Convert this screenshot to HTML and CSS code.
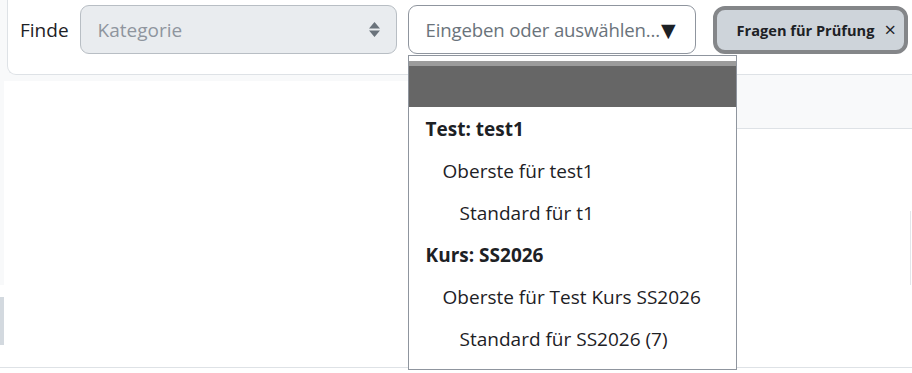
FILE: index.html
```html
<!DOCTYPE html>
<html lang="de">
<head>
<meta charset="utf-8">
<title>Fragen</title>
<link rel="stylesheet" href="styles.css">
</head>
<body>
<div class="top">
  <div class="card">
    <div class="toolbar">
      <span class="finde">Finde</span>
      <div class="select">
        <span>Kategorie</span>
        <svg class="arrows" width="11" height="15" viewBox="0 0 11 15"><path d="M5.5 0 L11 6.5 H0 Z M0 8.5 H11 L5.5 15 Z" fill="#6a737b"/></svg>
      </div>
      <div class="combo">
        <div class="input"><span class="ph">Eingeben oder auswählen...</span><span class="caret">▼</span></div>
        <div class="dropdown">
          <div class="dd-head"></div>
          <div class="item group">Test: test1</div>
          <div class="item lv1">Oberste für test1</div>
          <div class="item lv2">Standard für t1</div>
          <div class="item group">Kurs: SS2026</div>
          <div class="item lv1">Oberste für Test Kurs SS2026</div>
          <div class="item lv2">Standard für SS2026 (7)</div>
        </div>
      </div>
      <div class="chip"><span class="chip-text">Fragen für Prüfung</span><span class="chip-x">×</span></div>
    </div>
  </div>
</div>
<div class="content">
  <div class="lstrip">
    <div class="ls-a"></div>
    <div class="ls-b"></div>
    <div class="ls-c"></div>
  </div>
  <div class="lmain"></div>
  <div class="rmain">
    <div class="band"></div>
    <div class="vline"></div>
  </div>
</div>
</body>
</html>
```

FILE: styles.css
```css
html, body {
  margin: 0;
  padding: 0;
  background: #ffffff;
  overflow: hidden;
}
body {
  width: 912px;
  height: 373px;
  font-family: "Open Sans", "Noto Sans", sans-serif;
  color: #1d2125;
}
.top {
  background: #f8f9fa;
  padding-left: 7px;
  height: 75px;
}
.card {
  background: #ffffff;
  border: 1px solid #dee2e6;
  border-top: none;
  border-right: none;
  border-bottom-left-radius: 9px;
  box-sizing: border-box;
  height: 75px;
}
.toolbar {
  display: flex;
  align-items: center;
  padding: 5px 0 0 12px;
  height: 49px;
}
.finde {
  font-size: 19px;
  margin-right: 11px;
}
.select {
  width: 317px;
  height: 49px;
  box-sizing: border-box;
  background: #e9ecef;
  border: 1px solid #b8bec4;
  border-radius: 9px;
  display: flex;
  align-items: center;
  justify-content: space-between;
  padding: 0 16px 0 17px;
  font-size: 19px;
  color: #8f959e;
}
.arrows { display: block; }
.combo {
  position: relative;
  margin-left: 11px;
}
.input {
  width: 288px;
  height: 49px;
  box-sizing: border-box;
  background: #fff;
  border: 1px solid #8f959e;
  border-radius: 9px;
  display: flex;
  align-items: center;
  padding-left: 17px;
  font-size: 18.6px;
  letter-spacing: -0.15px;
  color: #6a737b;
  white-space: nowrap;
  overflow: hidden;
}
.caret {
  margin-left: 1px;
  font-size: 19px;
  line-height: 22px;
  color: #1d2125;
  font-family: "DejaVu Sans", sans-serif;
  letter-spacing: 0;
}
.dropdown {
  position: absolute;
  left: 0;
  top: 50px;
  width: 329px;
  height: 315px;
  box-sizing: border-box;
  background: #fff;
  border: 1px solid #8f959e;
  padding-top: 5px;
  z-index: 5;
}
.dd-head {
  height: 41px;
  background: #666666;
  border-top: 5px solid #9b9b9b;
}
.item {
  height: 42px;
  line-height: 44px;
  font-size: 19px;
  color: #1d2125;
  white-space: nowrap;
}
.group { font-weight: 700; padding-left: 17px; }
.lv1 { padding-left: 34px; }
.lv2 { padding-left: 51px; }
.chip {
  margin-left: 17px;
  width: 195px;
  height: 48px;
  box-sizing: border-box;
  background: #ced4da;
  border: 4px solid #848689;
  border-radius: 12px;
  display: flex;
  align-items: center;
  padding-left: 20px;
  font-size: 14.6px;
  font-weight: 700;
  color: #1d2125;
}
.chip-x {
  margin-left: 10px;
  font-size: 20px;
  font-weight: 400;
  line-height: 20px;
}
.content {
  display: flex;
  height: 292px;
  border-bottom: 1px solid #dee2e6;
}
.lstrip {
  width: 4px;
  display: flex;
  flex-direction: column;
}
.ls-a { height: 210px; background: #f8f9fa; }
.ls-b { height: 12px; }
.ls-c { height: 48px; background: #d3d9df; }
.lmain {
  width: 556px;
  border-top: 6px solid #f8f9fa;
  background: #fff;
}
.rmain {
  flex: 1;
  display: flex;
  flex-direction: column;
  align-items: flex-end;
}
.band {
  align-self: stretch;
  height: 53px;
  background: #f8f9fa;
  border-bottom: 1px solid #dee2e6;
}
.vline {
  width: 1px;
  height: 74px;
  margin-top: 82px;
  margin-right: 1px;
  background: #e3e6ea;
}
```
